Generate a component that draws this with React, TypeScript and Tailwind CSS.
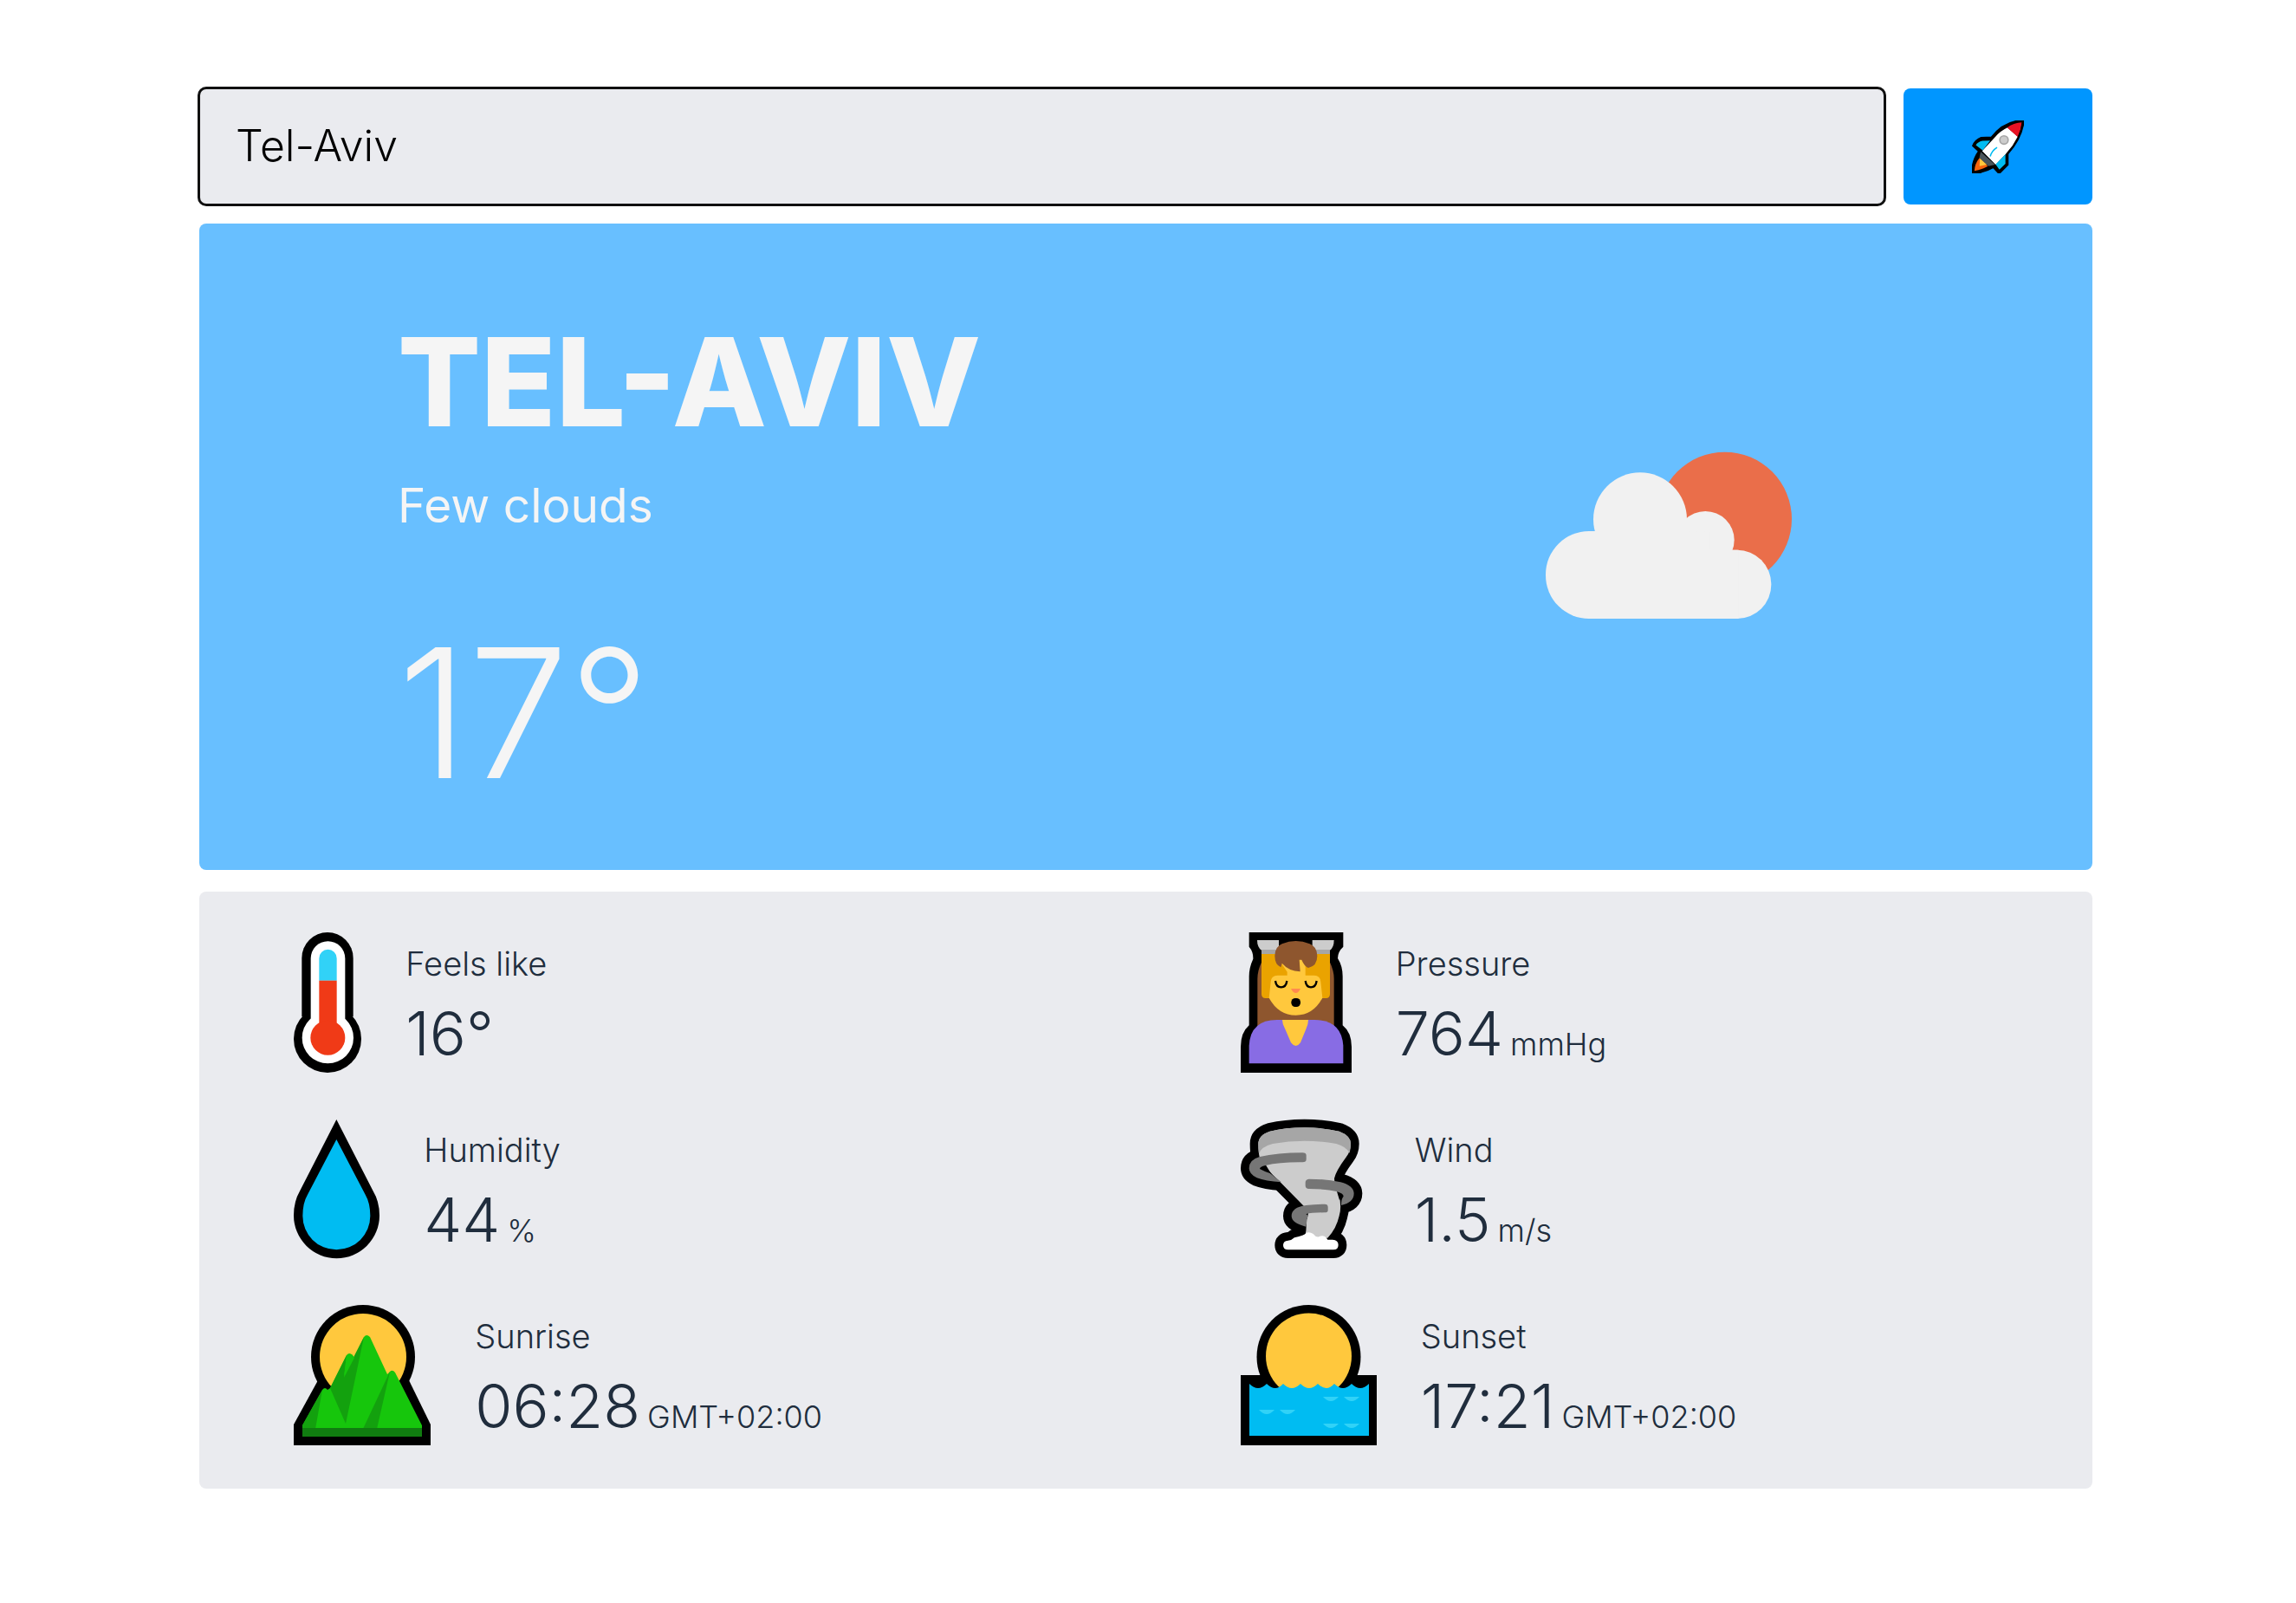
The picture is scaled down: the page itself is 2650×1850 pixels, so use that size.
import { useState, type ReactNode } from "react";

function RocketIcon() {
  return (
    <svg viewBox="348 174 180 184" className="h-[61px] w-[60px]" aria-hidden="true">
      <path d="M527 175Q460 176 416 234L380 235Q360 243 352 262L373 281Q350 312 348 357Q388 356 422 336L442 357L471 328V290Q520 235 527 175Z" fill="#000" />
      <path d="M471 199Q446 211 430 230L383 280L430 328L466 290Q500 256 509 232Z" fill="#fff" />
      <path d="M521 181Q492 183 470 199L508 232Q518 208 521 181Z" fill="#e81224" />
      <circle cx="459" cy="242" r="17" fill="#a6a6a6" />
      <circle cx="459" cy="242" r="12" fill="#ccc" />
      <path d="M411 244L384 245Q367 249 361 260L385 278Z" fill="#00bcf2" />
      <path d="M464 292V325L443 345L430 327Z" fill="#00bcf2" />
      <path d="M378 283L428 328L405 333L373 305Z" fill="#4a5459" />
      <path d="M373 305L403 333Q380 346 356 350Q357 325 373 305Z" fill="#f7630c" />
      <path d="M375 306L399 328L374 333Z" fill="#ffc83d" />
      <path d="M411 299Q417 279 435 268" fill="none" stroke="#00bcf2" strokeWidth="5" />
      <path d="M527 175Q460 176 416 234L380 235Q360 243 352 262L373 281Q350 312 348 357Q388 356 422 336L442 357L471 328V290Q520 235 527 175Z" fill="none" stroke="#000" strokeWidth="8" />
    </svg>
  );
}

function FewCloudsIcon() {
  return (
    <svg viewBox="132 123 852 582" className="mb-[68px] h-[194px] w-[284px]" role="img" aria-label="Few clouds">
      <circle cx="752" cy="357" r="232" fill="#ea6e4a" />
      <g fill="#f1f1f1">
        <circle cx="459" cy="358" r="162" />
        <circle cx="685" cy="430" r="100" />
        <rect x="132" y="399" width="330" height="303" rx="150" />
        <rect x="500" y="464" width="413" height="238" rx="118" />
        <path d="M280 399H600L700 400V464H800V702H280Z" />
      </g>
    </svg>
  );
}

function ThermometerIcon() {
  return (
    <svg viewBox="57 78 234 486" className="h-[162px] w-[78px]" aria-hidden="true">
      <path d="M85 167A89 89 0 0 1 263 167V370H85Z" />
      <circle cx="174" cy="447" r="117" />
      <path d="M116 168A59.500 59.500 0 0 1 235 168V400H116Z" fill="#fff" />
      <circle cx="175" cy="443" r="89" fill="#fff" />
      <path d="M145 168A30.500 30.500 0 0 1 206 168V245H145Z" fill="#31d2f7" />
      <rect x="145" y="245" width="61" height="160" fill="#f03a17" />
      <circle cx="175" cy="443" r="60" fill="#f03a17" />
    </svg>
  );
}

function DropIcon() {
  return (
    <svg viewBox="56 63 297 486" className="h-[162px] w-[99px]" aria-hidden="true">
      <path d="M204 66L330 312Q353 350 353 398A148.500 148.500 0 0 1 56 398Q56 350 78 312Z" />
      <path d="M204 135L304 326Q321 355 321 400A117 117 0 0 1 87 400Q87 355 104 326Z" fill="#00bcf2" />
    </svg>
  );
}

function SunriseIcon() {
  return (
    <svg viewBox="18 26 158 162" className="h-[162px] w-[158px]" aria-hidden="true">
      <circle cx="98" cy="86" r="60" />
      <path d="M46 113L18 164V188H176V164L151 113Z" />
      <circle cx="98" cy="86" r="50" fill="#ffc83d" />
      <path d="M46 113L60 122L50 130Z" />
      <path d="M28 170V165L51 124Q54 120 57 124L60 122L79 84Q82 80 86 84L88 87L99 63Q102 59 106 63L126 106L129 103Q132 100 135 104L166 165V170Z" fill="#16c60c" />
      <path d="M28 165L51 124L43 169H28Z" fill="#13a10e" />
      <path d="M60 122L79 84L76 108L99 63L78 163Z" fill="#13a10e" />
      <path d="M79 84L76 110L88 87L85 83Z" fill="#16c60c" />
      <path d="M129 103L98 169H114Z" fill="#13a10e" />
      <rect x="28" y="168" width="138" height="10" fill="#107c10" />
    </svg>
  );
}

function SunsetIcon() {
  const ripples = [
    [116, 132],
    [140, 132],
    [42, 147],
    [66, 147],
    [116, 163],
    [140, 163],
  ];
  return (
    <svg viewBox="21 26 157 162" className="h-[162px] w-[157px]" aria-hidden="true">
      <circle cx="99.500" cy="86" r="60" />
      <rect x="21" y="107" width="157" height="81" />
      <circle cx="99.500" cy="85" r="49.500" fill="#ffc83d" />
      <path d="M31 117Q41 127 51 117Q61 127 70 117Q80 127 90 117Q100 127 110 117Q120 127 129 117Q139 127 149 117Q159 127 169 117V177H31Z" fill="#00bcf2" />
      {ripples.map(([x, y]) => (
        <path key={x + "-" + y} d={`M${x} ${y}h18q-9 10 -18 0Z`} fill="#31d2f7" />
      ))}
    </svg>
  );
}

function PressureIcon() {
  return (
    <svg viewBox="64 48 384 486" className="h-[162px] w-[128px]" aria-hidden="true">
      <path d="M93 48H419V98Q400 115 400 138Q417 165 417 200V370Q448 395 448 445V534H64V445Q64 395 93 370V200Q93 170 107 140Q108 115 93 98Z" />
      <path d="M136 152Q122 180 122 210V380H387V210Q387 180 373 152Z" fill="#8e562e" />
      <path d="M136 122H373V262Q373 276 359 276H335V210H175V276H150Q136 276 136 262Z" fill="#eaa300" />
      <path d="M205 155L225 185V197H192Q169 197 168 220L162 275Q195 335 255 335Q315 335 347 275L341 220Q340 197 318 197H288V140H230Z" fill="#ffc83d" />
      <path d="M190 72H320V110H190Z" />
      <path d="M121 75H196V110H136Q121 100 121 75Z" fill="#ccc" />
      <path d="M387 75H312V110H373Q387 100 387 75Z" fill="#ccc" />
      <path d="M136 108H192V123H136ZM316 108H373V123H316Z" fill="#a6a6a6" />
      <path d="M182 130Q182 98 207 88Q255 68 303 88Q329 98 329 130Q329 165 298 171Q284 165 275 143H267L270 184Q230 182 207 155L203 169Q182 160 182 130Z" fill="#8e562e" />
      <path d="M184 216Q187 238 204 238Q221 238 224 216M288 216Q291 238 307 238Q324 238 327 216" fill="none" stroke="#000" strokeWidth="7" />
      <path d="M238 243H271Q264 258 255 258Q245 258 238 243Z" fill="#ff8a4f" />
      <rect x="239" y="276" width="32" height="30" rx="14" />
      <path d="M93 502V440Q98 351 190 351H320Q413 351 419 440V502Z" fill="#886ce4" />
      <path d="M208 351H298Q298 368 290 383L271 430Q255 452 238 430L218 383Q208 368 208 351Z" fill="#ffc83d" />
    </svg>
  );
}

const funnel =
  "M125 150Q125 120 165 107Q220 94 285 94Q350 94 405 107Q445 122 445 150Q445 175 430 195Q393 245 388 270Q388 290 405 330Q414 370 405 400Q395 445 365 476H286Q298 420 285 368L195 277Q150 235 130 200Q125 180 125 150Z";
const upperRing =
  "M278 181Q291 181 291 190V204Q291 214 278 214Q200 213 150 225Q130 229 130 237Q150 248 165 252L205 283Q150 280 120 268Q93 255 93 235Q93 205 130 195Q190 181 278 181Z";
const middleRing =
  "M300 272Q288 273 288 284V294Q288 306 300 306Q360 306 395 315Q420 322 420 332Q412 340 412 363Q456 354 456 322Q455 295 410 283Q360 272 300 272Z";
const lowerRing =
  "M355 359Q366 359 366 369V380Q366 388 355 388Q310 388 290 393L296 398L290 437Q240 425 240 400Q240 370 290 363Q320 359 355 359Z";
const dust =
  "M228 485Q240 485 250 475Q285 468 290 460Q300 452 315 462Q325 475 335 472Q350 465 360 475L365 482H382Q402 483 402 500Q402 517 385 517H228Q211 517 211 501Q211 486 228 485Z";

function TornadoIcon() {
  return (
    <svg viewBox="64 63 450 486" className="h-[162px] w-[150px]" aria-hidden="true">
      <g stroke="#000" strokeWidth="58" strokeLinejoin="round">
        <path d={funnel} />
        <path d={upperRing} />
        <path d={middleRing} />
        <path d={lowerRing} />
        <path d={dust} />
      </g>
      <path d={funnel} fill="#ccc" />
      <path d="M127 185Q135 160 175 150Q285 130 395 150Q430 160 441 182Q445 165 445 150Q445 122 405 107Q350 94 285 94Q220 94 165 107Q125 120 125 150Q125 170 127 185Z" fill="#a6a6a6" />
      <path d="M128 237L150 222L168 252ZM395 308L422 325L406 345ZM276 392L298 390L294 412Z" />
      <g fill="#767676">
        <path d={upperRing} />
        <path d={middleRing} />
        <path d={lowerRing} />
      </g>
      <path d={dust} fill="#fff" />
    </svg>
  );
}

function Reading(props: { icon: ReactNode; label: string; value: string; unit?: string }) {
  return (
    <li className="flex items-end gap-[51px] pl-[10%]">
      <div className="shrink-0">{props.icon}</div>
      <div className="whitespace-nowrap">
        <h2 className="mb-[14px] text-[38px] leading-[44px]">{props.label}</h2>
        <p className="text-[70px] leading-[90px]">
          {props.value}
          {props.unit && <span className="ml-[8px] text-[36px] leading-[44px]">{props.unit}</span>}
        </p>
      </div>
    </li>
  );
}

export default function App() {
  const [city, setCity] = useState("Tel-Aviv");
  return (
    <main className="flex min-h-screen flex-col gap-[22px] bg-white pt-[102px] pr-[235px] pb-[60px] pl-[230px] font-['Inter',sans-serif]">
      <form className="flex gap-[22px]" onSubmit={(e) => e.preventDefault()}>
        <input
          type="text"
          aria-label="City"
          value={city}
          onChange={(e) => setCity(e.target.value)}
          className="h-[134px] min-w-0 flex-1 rounded-lg bg-[#eaebef] px-[42px] pb-[2px] text-[50px] font-light text-black outline-3 -outline-offset-1 outline-[#101010]"
        />
        <button type="submit" aria-label="Search" className="flex w-[218px] items-center justify-center rounded-lg bg-[#0096ff]">
          <RocketIcon />
        </button>
      </form>

      <section className="flex items-center justify-between rounded-lg bg-[#68bfff] pt-[102px] pr-[347px] pb-[61px] pl-[229px] text-[#f5f5f5]">
        <div>
          <h1 className="text-[142px] leading-[160px] font-extrabold uppercase">Tel-Aviv</h1>
          <p className="mt-[31px] text-[55px] leading-[64px]">Few clouds</p>
          <p className="mt-[88px] text-[207px] leading-[240px] font-light">17°</p>
        </div>
        <FewCloudsIcon />
      </section>

      <ul className="mt-[3px] grid grid-cols-2 gap-y-[53px] rounded-lg bg-[#eaebef] pt-[47px] pb-[50px] font-light text-[#202d3d]">
        <Reading icon={<ThermometerIcon />} label="Feels like" value="16°" />
        <Reading icon={<PressureIcon />} label="Pressure" value="764" unit="mmHg" />
        <Reading icon={<DropIcon />} label="Humidity" value="44" unit="%" />
        <Reading icon={<TornadoIcon />} label="Wind" value="1.5" unit="m/s" />
        <Reading icon={<SunriseIcon />} label="Sunrise" value="06:28" unit="GMT+02:00" />
        <Reading icon={<SunsetIcon />} label="Sunset" value="17:21" unit="GMT+02:00" />
      </ul>
    </main>
  );
}
